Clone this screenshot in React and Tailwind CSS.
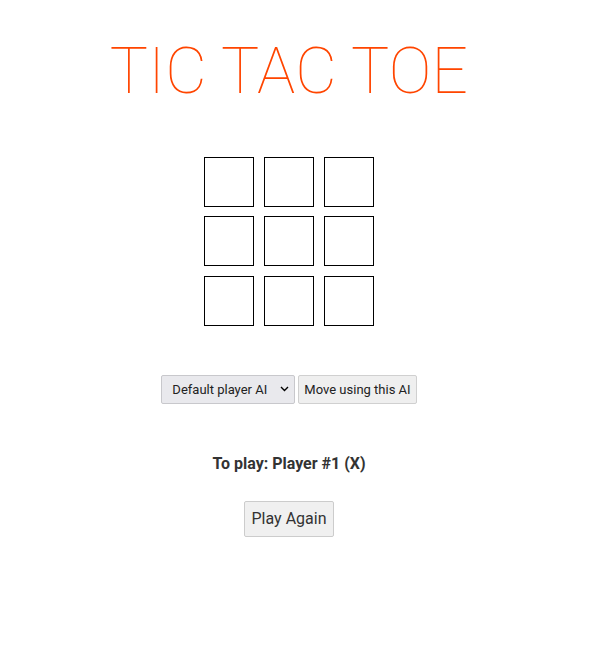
import React, { useState } from 'react';

const Cell = ({ value, onClick }) => (
  <button
    onClick={onClick}
    className="w-[50px] h-[50px] border border-black bg-white text-[28px] leading-none"
  >
    {value}
  </button>
);

const App = () => {
  const [board, setBoard] = useState(Array(9).fill(''));
  const [turn, setTurn] = useState('X');

  const play = (i) => {
    if (board[i]) return;
    const next = [...board];
    next[i] = turn;
    setBoard(next);
    setTurn(turn === 'X' ? 'O' : 'X');
  };

  const reset = () => {
    setBoard(Array(9).fill(''));
    setTurn('X');
  };

  return (
    <div className="w-[578px] flex flex-col items-center font-['Roboto',sans-serif] text-[#333]">
      <h1 className="mt-[36px] text-[64px] leading-[72px] font-thin text-[#ff4500] tracking-[0.2px]">
        TIC TAC TOE
      </h1>

      <div className="mt-[49px] flex flex-col">
        {[0, 1, 2].map((r) => (
          <div key={r} className={`flex gap-[10px] ${r === 0 ? 'mb-[9px]' : r === 1 ? 'mb-[10px]' : ''}`}>
            {[0, 1, 2].map((c) => (
              <Cell key={c} value={board[r * 3 + c]} onClick={() => play(r * 3 + c)} />
            ))}
          </div>
        ))}
      </div>

      <div className="mt-[49px] flex gap-[3px] text-[13px] text-[#222]">
        <div className="relative">
          <select className="appearance-none h-[29px] w-[134px] pl-[10px] pr-[24px] bg-[#e9e9ed] border border-[#c8c8cc] rounded-[2px]">
            <option>Default player AI</option>
          </select>
          <svg className="absolute right-[6px] top-[11px] pointer-events-none" width="9" height="6" viewBox="0 0 9 6">
            <path d="M1 1l3.5 3.5L8 1" fill="none" stroke="#000" strokeWidth="1.4" />
          </svg>
        </div>
        <button className="h-[29px] px-[5px] bg-[#efefef] border border-[#d0d0d0] rounded-[2px]">
          Move using this AI
        </button>
      </div>

      <p className="mt-[49px] text-[16px] leading-[22px] font-bold">
        To play: Player #1 ({turn})
      </p>

      <button
        onClick={reset}
        className="mt-[26px] h-[36px] px-[7px] text-[16px] bg-[#f0f0f0] border border-[#cccccc] rounded-[2px]"
      >
        Play Again
      </button>
    </div>
  );
};

export default App;
